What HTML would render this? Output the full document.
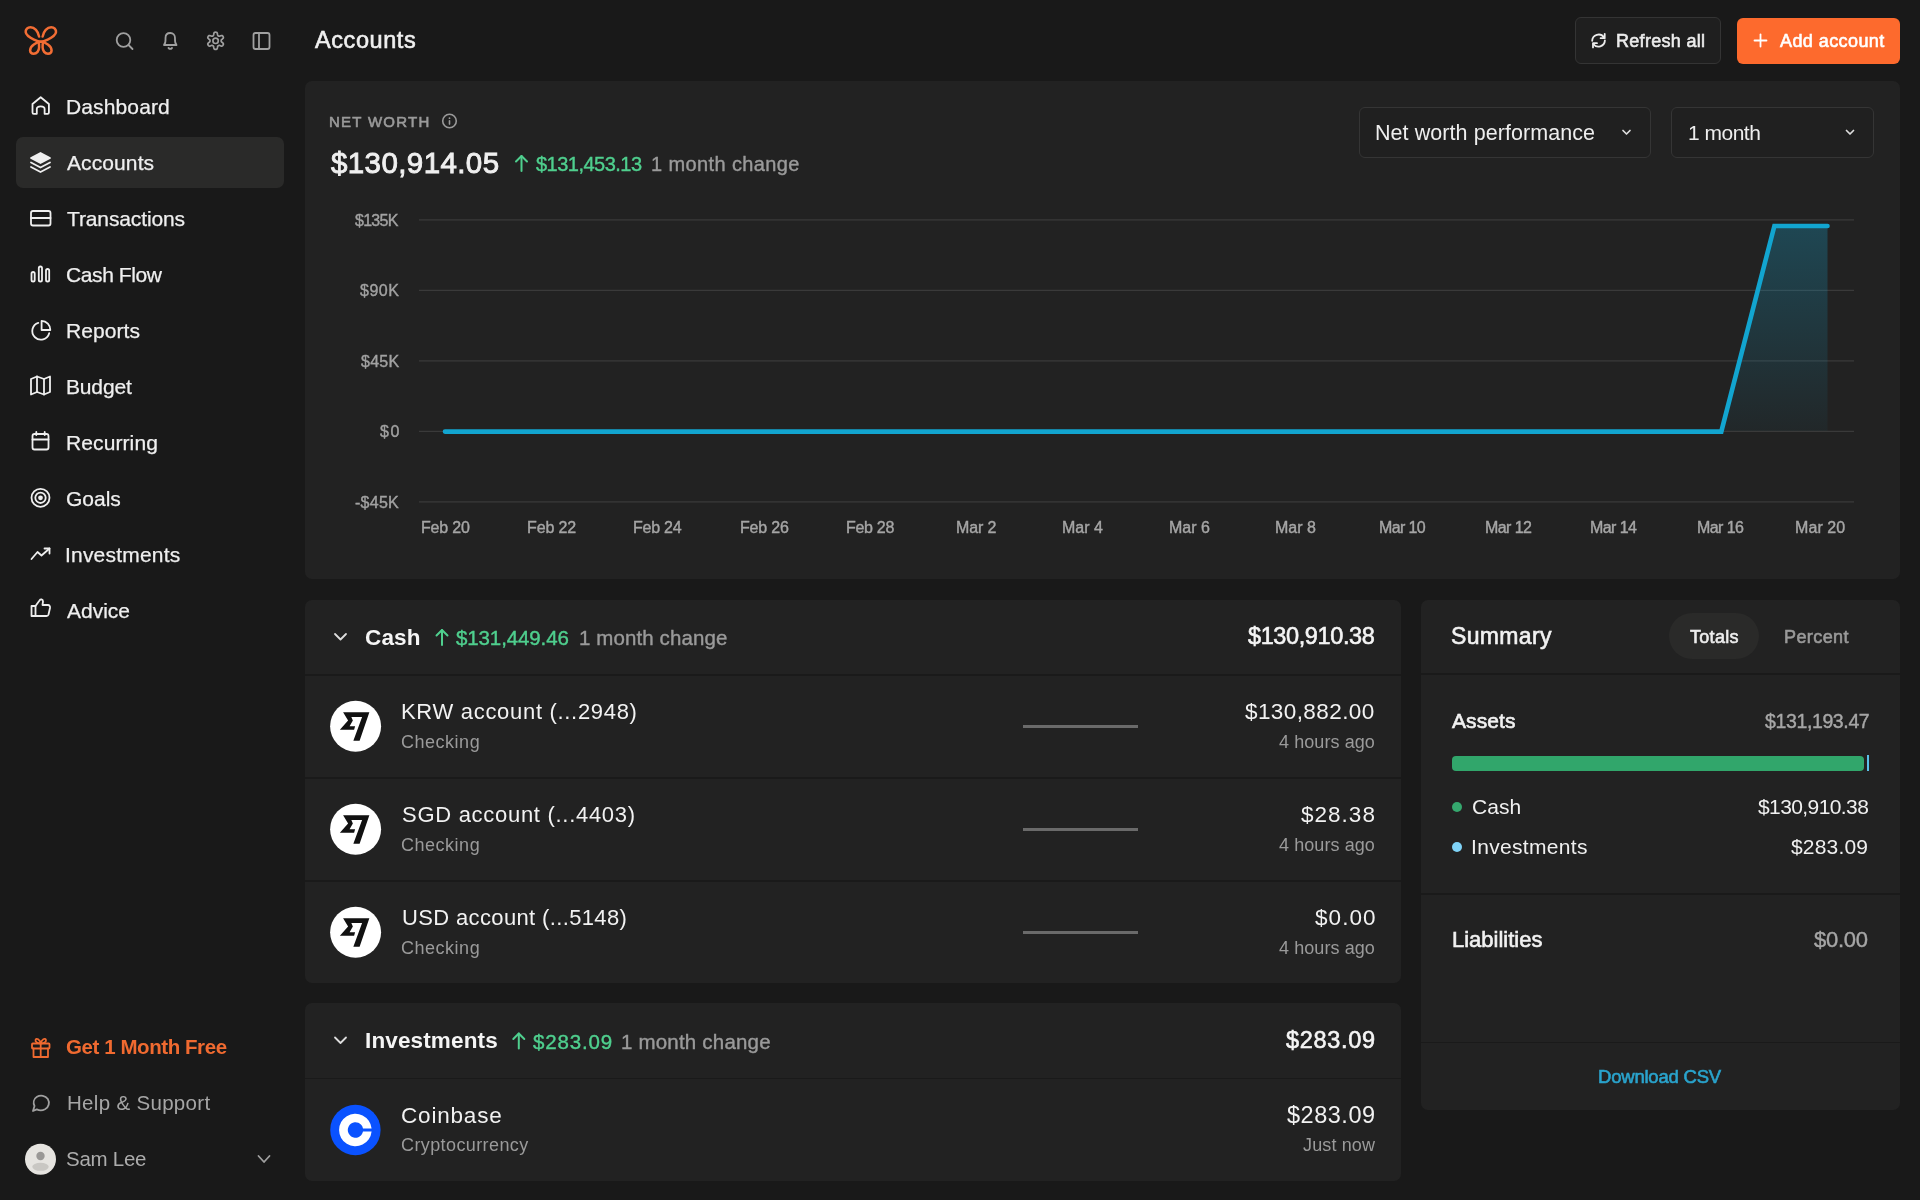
<!DOCTYPE html>
<html><head><meta charset="utf-8"><title>Accounts</title><style>
*{margin:0;padding:0;box-sizing:border-box}
html,body{width:1920px;height:1200px;overflow:hidden;background:#191919;font-family:"Liberation Sans",sans-serif}
.t{position:absolute;white-space:nowrap;line-height:1;will-change:transform}
.abs{position:absolute}
.card{position:absolute;background:#222222;border-radius:7px}
.sep{position:absolute;height:1.5px;background:#1a1a1a}
</style></head>
<body style="">
<div class="card shape" style="left:305px;top:81px;width:1595px;height:497.7px"></div>
<div class="card shape" style="left:305px;top:599.5px;width:1095.8px;height:383.5px"></div>
<div class="card shape" style="left:305px;top:1002.5px;width:1095.8px;height:178.8px"></div>
<div class="card shape" style="left:1420.5px;top:599.5px;width:479.5px;height:510.5px"></div>
<div class="sep shape" style="left:305px;top:674px;width:1096px"></div>
<div class="sep shape" style="left:305px;top:777px;width:1096px"></div>
<div class="sep shape" style="left:305px;top:880px;width:1096px"></div>
<div class="sep shape" style="left:305px;top:1077.5px;width:1096px"></div>
<div class="sep shape" style="left:1421px;top:673px;width:479px"></div>
<div class="sep shape" style="left:1421px;top:893px;width:479px"></div>
<div class="sep shape" style="left:1421px;top:1041.5px;width:479px"></div>
<div class="abs shape" style="left:16px;top:137px;width:268px;height:51px;background:#2a2a29;border-radius:7px"></div>
<div class="abs shape" style="left:1575px;top:17px;width:146px;height:47px;background:#1f1f1f;border:1.5px solid #343434;border-radius:6px"></div>
<div class="abs shape" style="left:1737px;top:18px;width:163px;height:46px;background:#fd6a2d;border-radius:6px"></div>
<div class="abs shape" style="left:1359px;top:107px;width:292px;height:51px;background:#202020;border:1.5px solid #353535;border-radius:6px"></div>
<div class="abs shape" style="left:1671px;top:107px;width:203px;height:51px;background:#202020;border:1.5px solid #353535;border-radius:6px"></div>
<div class="abs shape" style="left:1669px;top:613px;width:90px;height:46px;background:#2a2a29;border-radius:23px"></div>
<div class="abs shape" style="left:1452px;top:755.5px;width:412px;height:15px;background:#31a66b;border-radius:4px"></div>
<div class="abs shape" style="left:1867px;top:755px;width:2px;height:16px;background:#5bc0e8"></div>
<div class="abs shape" style="left:1451.5px;top:802px;width:10px;height:10px;background:#35a86e;border-radius:50%"></div>
<div class="abs shape" style="left:1451.5px;top:842px;width:10px;height:10px;background:#7fd3f7;border-radius:50%"></div>
<div class="abs shape" style="left:1023px;top:724.9px;width:115px;height:2.8px;background:#6a6a6a"></div>
<div class="abs shape" style="left:1023px;top:827.9px;width:115px;height:2.8px;background:#6a6a6a"></div>
<div class="abs shape" style="left:1023px;top:930.9px;width:115px;height:2.8px;background:#6a6a6a"></div>
<svg class="abs shape" style="left:0;top:0;width:1920px;height:1200px" viewBox="0 0 1920 1200"><line x1="419" y1="219.8" x2="1854" y2="219.8" stroke="#3a3a3a" stroke-width="1.3"/><line x1="419" y1="290.3" x2="1854" y2="290.3" stroke="#3a3a3a" stroke-width="1.3"/><line x1="419" y1="360.8" x2="1854" y2="360.8" stroke="#3a3a3a" stroke-width="1.3"/><line x1="419" y1="431.3" x2="1854" y2="431.3" stroke="#3a3a3a" stroke-width="1.3"/><line x1="419" y1="501.8" x2="1854" y2="501.8" stroke="#3a3a3a" stroke-width="1.3"/><defs><linearGradient id="fg" x1="0" y1="0" x2="0" y2="1">
<stop offset="0" stop-color="#16a6d2" stop-opacity="0.28"/><stop offset="1" stop-color="#16a6d2" stop-opacity="0.04"/></linearGradient></defs>
<path d="M1721.3 431 L1774.4 226 L1827.5 226 L1827.5 431 Z" fill="url(#fg)"/>
<path d="M445 431.6 L1721.3 431.6 L1774.4 226 L1827.5 226" fill="none" stroke="#12a5d0" stroke-width="4.6" stroke-linecap="round" stroke-linejoin="miter"/></svg>
<svg class="abs shape" style="left:0;top:0;width:1920px;height:1200px" viewBox="0 0 1920 1200"><g transform="translate(18,20)" fill="none" stroke-linecap="round" stroke-linejoin="round" stroke="#f26d34" stroke-width="2.5">
<path d="M21.1 16.6 C20.2 11 16.5 7.2 12.5 7.2 C9.5 7.2 7.5 9.5 7.7 12.2 C8 15.5 11.8 17.6 16 19.6 C19 21 21 21.7 22.85 21.7 C24.7 21.7 26.7 21 29.7 19.6 C33.9 17.6 37.7 15.5 38 12.2 C38.2 9.5 36.2 7.2 33.2 7.2 C29.2 7.2 25.5 11 24.6 16.6"/>
<path d="M22.3 21.8 C18.8 22.3 12 25.5 12.1 30.5 C12.2 32.8 13.8 33.8 15.7 33.8 C18.8 33.8 21.1 30.8 21.1 27.3 C21.1 25 21 23.2 20.6 21.9"/>
<path d="M23.4 21.8 C26.9 22.3 33.7 25.5 33.6 30.5 C33.5 32.8 31.9 33.8 30 33.8 C26.9 33.8 24.6 30.8 24.6 27.3 C24.6 25 24.7 23.2 25.1 21.9"/>
</g><g fill="none" stroke-linecap="round" stroke-linejoin="round" stroke="#a0a0a0" stroke-width="1.8"><circle cx="123.5" cy="40" r="6.8"/><path d="M128.5 45 L132.5 49"/></g><g fill="none" stroke-linecap="round" stroke-linejoin="round" stroke="#a0a0a0" stroke-width="1.8"><path d="M164 45 C166 43 165.5 40 165.5 38 C165.5 35 167.5 33 170.3 33 C173 33 175 35 175 38 C175 40 174.5 43 176.5 45 Z"/><path d="M168.5 48 C169.5 49 171 49 172 48"/></g><g fill="none" stroke-linecap="round" stroke-linejoin="round" stroke="#a0a0a0" stroke-width="1.7"><path d="M215.60 32.19 L216.16 32.23 L216.71 32.41 L217.17 32.90 L217.44 33.94 L217.58 34.98 L217.79 35.50 L218.08 35.77 L218.39 35.96 L218.72 36.13 L219.09 36.25 L219.65 36.18 L220.62 35.78 L221.66 35.49 L222.32 35.65 L222.74 36.03 L223.06 36.49 L223.30 37.00 L223.42 37.56 L223.23 38.21 L222.46 38.96 L221.63 39.60 L221.28 40.05 L221.20 40.43 L221.19 40.80 L221.20 41.17 L221.28 41.55 L221.63 42.00 L222.46 42.64 L223.23 43.39 L223.42 44.04 L223.30 44.60 L223.06 45.11 L222.74 45.57 L222.32 45.95 L221.66 46.11 L220.62 45.82 L219.65 45.42 L219.09 45.35 L218.72 45.47 L218.39 45.64 L218.08 45.83 L217.79 46.10 L217.58 46.62 L217.44 47.66 L217.17 48.70 L216.71 49.19 L216.16 49.37 L215.60 49.41 L215.04 49.37 L214.49 49.19 L214.03 48.70 L213.76 47.66 L213.62 46.62 L213.41 46.10 L213.12 45.83 L212.81 45.64 L212.48 45.47 L212.11 45.35 L211.55 45.42 L210.58 45.82 L209.54 46.11 L208.88 45.95 L208.46 45.57 L208.14 45.11 L207.90 44.60 L207.78 44.04 L207.97 43.39 L208.74 42.64 L209.57 42.00 L209.92 41.55 L210.00 41.17 L210.01 40.80 L210.00 40.43 L209.92 40.05 L209.57 39.60 L208.74 38.96 L207.97 38.21 L207.78 37.56 L207.90 37.00 L208.14 36.49 L208.46 36.03 L208.88 35.65 L209.54 35.49 L210.58 35.78 L211.55 36.18 L212.11 36.25 L212.48 36.13 L212.81 35.96 L213.12 35.77 L213.41 35.50 L213.62 34.98 L213.76 33.94 L214.03 32.90 L214.49 32.41 L215.04 32.23 Z"/><circle cx="215.6" cy="40.8" r="2.7"/></g><g fill="none" stroke-linecap="round" stroke-linejoin="round" stroke="#a0a0a0" stroke-width="1.8"><rect x="253.5" y="33" width="16" height="16" rx="2"/><path d="M259 33 L259 49"/></g><g fill="none" stroke-linecap="round" stroke-linejoin="round" stroke="#efefef" stroke-width="1.8"><path d="M32.5 104 L40.7 97.2 L48.9 104 L48.9 112.5 C48.9 113.3 48.4 113.8 47.6 113.8 L44.6 113.8 L44.6 109 C44.6 107.4 43.2 106.3 40.7 106.3 C38.2 106.3 36.8 107.4 36.8 109 L36.8 113.8 L33.8 113.8 C33 113.8 32.5 113.3 32.5 112.5 Z"/></g><g fill="none" stroke-linecap="round" stroke-linejoin="round" stroke="#efefef" stroke-width="1.8"><path d="M40.5 153 L50 158 L40.5 163 L31 158 Z" fill="#efefef"/><path d="M31 162.5 L40.5 167.5 L50 162.5"/><path d="M31 167 L40.5 172 L50 167"/></g><g fill="none" stroke-linecap="round" stroke-linejoin="round" stroke="#efefef" stroke-width="1.8"><rect x="31" y="211" width="19.5" height="14.5" rx="2"/><path d="M31 218 L50.5 218"/></g><g fill="none" stroke-linecap="round" stroke-linejoin="round" stroke="#efefef" stroke-width="1.8"><rect x="31.5" y="272" width="3.2" height="9.5" rx="1.6"/><rect x="38.8" y="266.5" width="3.2" height="15" rx="1.6"/><rect x="46" y="269" width="3.2" height="12.5" rx="1.6"/></g><g fill="none" stroke-linecap="round" stroke-linejoin="round" stroke="#efefef" stroke-width="1.8"><path d="M38.3 322.8 A 8.6 8.6 0 1 0 49.2 333.2"/><path d="M41.6 320.9 L41.6 330 L50.3 330 A 8.9 8.9 0 0 0 41.6 320.9 Z"/></g><g fill="none" stroke-linecap="round" stroke-linejoin="round" stroke="#efefef" stroke-width="1.8"><path d="M31 379 L37 376.5 L44 379 L50 376.5 L50 392 L44 394.5 L37 392 L31 394.5 Z"/><path d="M37 376.5 L37 392"/><path d="M44 379 L44 394.5"/></g><g fill="none" stroke-linecap="round" stroke-linejoin="round" stroke="#efefef" stroke-width="1.8"><rect x="32.5" y="434" width="16" height="15.5" rx="2"/><path d="M32.5 439.5 L48.5 439.5"/><path d="M36.3 432 L36.3 435"/><path d="M44.7 432 L44.7 435"/></g><g fill="none" stroke-linecap="round" stroke-linejoin="round" stroke="#efefef" stroke-width="1.8"><circle cx="40.5" cy="497.8" r="9"/><circle cx="40.5" cy="497.8" r="5.2"/><circle cx="40.5" cy="497.8" r="1.5" fill="#efefef"/></g><g fill="none" stroke-linecap="round" stroke-linejoin="round" stroke="#efefef" stroke-width="1.8"><path d="M31.5 559 L37.5 552 L41.5 555.5 L49.5 548.5"/><path d="M44.5 548.5 L49.5 548.5 L49.5 553.5"/></g><g fill="none" stroke-linecap="round" stroke-linejoin="round" stroke="#efefef" stroke-width="1.8"><path d="M31.5 606 L35.5 606 L35.5 616 L31.5 616 Z"/><path d="M35.5 606 L39.5 600.5 C40.5 599 43 599 43 601.5 L42.5 605 L48 605 C49.5 605 50.3 606.5 50 608 L48.5 614.5 C48.2 615.5 47.5 616 46.5 616 L35.5 616"/></g><g fill="none" stroke-linecap="round" stroke-linejoin="round" stroke="#f06a30" stroke-width="1.8"><rect x="32" y="1043.5" width="17.5" height="5" rx="0.8"/><path d="M33.5 1048.5 L33.5 1057 L48 1057 L48 1048.5"/><path d="M40.7 1043.5 L40.7 1057"/><path d="M40.7 1043.5 C38 1043.5 35 1042 35.5 1040 C36.3 1037.5 40 1039.5 40.7 1043.5 C41.5 1039.5 45.2 1037.5 46 1040 C46.5 1042 43.5 1043.5 40.7 1043.5"/></g><g fill="none" stroke-linecap="round" stroke-linejoin="round" stroke="#a0a0a0" stroke-width="1.8"><path d="M33 1111 L34.5 1106 C33 1103 33.5 1099 37 1096.8 C40.5 1094.6 45.5 1095.5 47.8 1099 C50 1102.5 48.8 1107.2 45 1109.3 C42.3 1110.7 39 1110.5 36.8 1109.4 Z"/></g><circle cx="40.5" cy="1159.3" r="15.5" fill="#e6e4e0"/><circle cx="40.5" cy="1156" r="4.2" fill="#9a9896"/><ellipse cx="40.5" cy="1166.8" rx="8.2" ry="4" fill="#c9c7c3"/><path d="M258.5 1156 L264 1162 L269.5 1156" fill="none" stroke-linecap="round" stroke-linejoin="round" stroke="#a0a0a0" stroke-width="1.8"/><g fill="none" stroke-linecap="round" stroke-linejoin="round" stroke="#ececec" stroke-width="1.8"><path d="M1592.2 40.8 A6.4 6.4 0 0 1 1603.9 37.4"/><path d="M1604.7 33.8 L1604.7 38.2 L1600.6 38.2"/><path d="M1604.9 40.4 A6.4 6.4 0 0 1 1593.3 43.9"/><path d="M1593 47.4 L1593 43.2 L1597 43.2"/></g><g fill="none" stroke-linecap="round" stroke-linejoin="round" stroke="#ffffff" stroke-width="1.8"><path d="M1760.5 34.5 L1760.5 46.5"/><path d="M1754.5 40.5 L1766.5 40.5"/></g><g fill="none" stroke-linecap="round" stroke-linejoin="round" stroke="#9a9a9a" stroke-width="1.6"><circle cx="449.5" cy="121" r="6.8"/><path d="M449.5 120.8 L449.5 124.1"/></g><circle cx="449.5" cy="118.2" r="0.9" fill="#9a9a9a"/><g fill="none" stroke-linecap="round" stroke-linejoin="round" stroke="#4fcf8e" stroke-width="2"><path d="M521.5 171 L521.5 156"/><path d="M516.0 161.5 L521.5 156 L527.0 161.5"/></g><g fill="none" stroke-linecap="round" stroke-linejoin="round" stroke="#4fcf8e" stroke-width="2"><path d="M442 645 L442 630"/><path d="M436.5 635.5 L442 630 L447.5 635.5"/></g><g fill="none" stroke-linecap="round" stroke-linejoin="round" stroke="#4fcf8e" stroke-width="2"><path d="M518.8 1048.5 L518.8 1033.5"/><path d="M513.3 1039.0 L518.8 1033.5 L524.3 1039.0"/></g><path d="M1623.0 130.5 L1626.5 134 L1630.0 130.5" fill="none" stroke-linecap="round" stroke-linejoin="round" stroke="#dddddd" stroke-width="1.7"/><path d="M1846.5 130.5 L1850 134 L1853.5 130.5" fill="none" stroke-linecap="round" stroke-linejoin="round" stroke="#dddddd" stroke-width="1.7"/><path d="M335 634 L340.5 639.5 L346 634" fill="none" stroke-linecap="round" stroke-linejoin="round" stroke="#dddddd" stroke-width="1.8"/><path d="M335 1037.5 L340.5 1043.0 L346 1037.5" fill="none" stroke-linecap="round" stroke-linejoin="round" stroke="#dddddd" stroke-width="1.8"/><circle cx="355.6" cy="726.3" r="25.5" fill="#ffffff"/><path d="M343.10 712.25 L369.35 712.25 L359.60 740.75 L353.35 740.75 L362.10 717.00 L351.35 717.00 L352.85 720.50 L349.60 726.25 L355.10 726.25 L354.10 729.75 L339.85 729.75 L348.10 720.50 Z" fill="#111111"/><circle cx="355.6" cy="829.3" r="25.5" fill="#ffffff"/><path d="M343.10 815.25 L369.35 815.25 L359.60 843.75 L353.35 843.75 L362.10 820.00 L351.35 820.00 L352.85 823.50 L349.60 829.25 L355.10 829.25 L354.10 832.75 L339.85 832.75 L348.10 823.50 Z" fill="#111111"/><circle cx="355.6" cy="932.3" r="25.5" fill="#ffffff"/><path d="M343.10 918.25 L369.35 918.25 L359.60 946.75 L353.35 946.75 L362.10 923.00 L351.35 923.00 L352.85 926.50 L349.60 932.25 L355.10 932.25 L354.10 935.75 L339.85 935.75 L348.10 926.50 Z" fill="#111111"/><circle cx="355.4" cy="1130" r="25.2" fill="#0a52ff"/><path d="M371.6 1128.4 A16.3 16.3 0 1 0 371.6 1131.6 L363 1131.6 A7.7 7.7 0 1 1 363 1128.4 Z" fill="#ffffff"/></svg>
<span id="t0" class="t" style="left:314.50px;top:29px;font-size:23.5px;font-weight:normal;letter-spacing:0.571px;color:#f0f0f0;-webkit-text-stroke:0.6px #f0f0f0">Accounts</span>
<span id="t1" class="t" style="left:1616.10px;top:32px;font-size:18.0px;font-weight:normal;letter-spacing:0.300px;color:#ececec;-webkit-text-stroke:0.6px #ececec">Refresh all</span>
<span id="t2" class="t" style="left:1779.90px;top:32px;font-size:18.0px;font-weight:normal;letter-spacing:0.420px;color:#ffffff;-webkit-text-stroke:0.6px #ffffff">Add account</span>
<span id="t3" class="t" style="left:65.50px;top:96px;font-size:21.0px;font-weight:normal;letter-spacing:0.125px;color:#efefef;-webkit-text-stroke:0.25px #efefef">Dashboard</span>
<span id="t4" class="t" style="left:66.50px;top:152px;font-size:21.0px;font-weight:normal;letter-spacing:0.101px;color:#efefef;-webkit-text-stroke:0.25px #efefef">Accounts</span>
<span id="t5" class="t" style="left:66.50px;top:208px;font-size:21.0px;font-weight:normal;letter-spacing:-0.128px;color:#efefef;-webkit-text-stroke:0.25px #efefef">Transactions</span>
<span id="t6" class="t" style="left:65.50px;top:264px;font-size:21.0px;font-weight:normal;letter-spacing:-0.400px;color:#efefef;-webkit-text-stroke:0.25px #efefef">Cash Flow</span>
<span id="t7" class="t" style="left:65.50px;top:320px;font-size:21.0px;font-weight:normal;letter-spacing:0.083px;color:#efefef;-webkit-text-stroke:0.25px #efefef">Reports</span>
<span id="t8" class="t" style="left:65.50px;top:376px;font-size:21.0px;font-weight:normal;letter-spacing:-0.160px;color:#efefef;-webkit-text-stroke:0.25px #efefef">Budget</span>
<span id="t9" class="t" style="left:65.50px;top:432px;font-size:21.0px;font-weight:normal;letter-spacing:0.100px;color:#efefef;-webkit-text-stroke:0.25px #efefef">Recurring</span>
<span id="t10" class="t" style="left:65.50px;top:488px;font-size:21.0px;font-weight:normal;letter-spacing:0.000px;color:#efefef;-webkit-text-stroke:0.25px #efefef">Goals</span>
<span id="t11" class="t" style="left:64.50px;top:544px;font-size:21.0px;font-weight:normal;letter-spacing:0.200px;color:#efefef;-webkit-text-stroke:0.25px #efefef">Investments</span>
<span id="t12" class="t" style="left:66.50px;top:600px;font-size:21.0px;font-weight:normal;letter-spacing:0.000px;color:#efefef;-webkit-text-stroke:0.25px #efefef">Advice</span>
<span id="t13" class="t" style="left:65.70px;top:1037px;font-size:20.5px;font-weight:bold;letter-spacing:-0.427px;color:#f06a30">Get 1 Month Free</span>
<span id="t14" class="t" style="left:66.70px;top:1093px;font-size:20.5px;font-weight:normal;letter-spacing:0.316px;color:#a6a6a6">Help & Support</span>
<span id="t15" class="t" style="left:65.50px;top:1149px;font-size:20.5px;font-weight:normal;letter-spacing:-0.266px;color:#acacac">Sam Lee</span>
<span id="t16" class="t" style="left:329.10px;top:114px;font-size:15px;font-weight:normal;letter-spacing:1.250px;color:#9a9a9a;-webkit-text-stroke:0.6px #9a9a9a">NET WORTH</span>
<span id="t17" class="t" style="left:330.50px;top:148px;font-size:29.5px;font-weight:normal;letter-spacing:0.400px;color:#f0f0f0;-webkit-text-stroke:0.9px #f0f0f0">$130,914.05</span>
<span id="t18" class="t" style="left:535.50px;top:154px;font-size:20px;font-weight:normal;letter-spacing:-0.520px;color:#4fcf8e;-webkit-text-stroke:0.4px #4fcf8e">$131,453.13</span>
<span id="t19" class="t" style="left:650.50px;top:154px;font-size:20px;font-weight:normal;letter-spacing:0.385px;color:#9a9a9a;-webkit-text-stroke:0.4px #9a9a9a">1 month change</span>
<span id="t20" class="t" style="left:1374.50px;top:123px;font-size:21.5px;font-weight:normal;letter-spacing:0.070px;color:#eeeeee">Net worth performance</span>
<span id="t21" class="t" style="left:1687.70px;top:122px;font-size:21px;font-weight:normal;letter-spacing:-0.500px;color:#eeeeee">1 month</span>
<span id="t22" class="t" style="left:354.70px;top:213px;font-size:16.0px;font-weight:normal;letter-spacing:-0.725px;color:#a2a2a2;-webkit-text-stroke:0.4px #a2a2a2">$135K</span>
<span id="t23" class="t" style="left:359.50px;top:283px;font-size:16.0px;font-weight:normal;letter-spacing:0.500px;color:#a2a2a2;-webkit-text-stroke:0.4px #a2a2a2">$90K</span>
<span id="t24" class="t" style="left:360.90px;top:354px;font-size:16.0px;font-weight:normal;letter-spacing:0.234px;color:#a2a2a2;-webkit-text-stroke:0.4px #a2a2a2">$45K</span>
<span id="t25" class="t" style="left:379.90px;top:424px;font-size:16.0px;font-weight:normal;letter-spacing:1.700px;color:#a2a2a2;-webkit-text-stroke:0.4px #a2a2a2">$0</span>
<span id="t26" class="t" style="left:354.70px;top:495px;font-size:16.0px;font-weight:normal;letter-spacing:0.275px;color:#a2a2a2;-webkit-text-stroke:0.4px #a2a2a2">-$45K</span>
<span id="t27" class="t" style="left:420.50px;top:520px;font-size:16.0px;font-weight:normal;letter-spacing:-0.200px;color:#a6a6a6;-webkit-text-stroke:0.4px #a6a6a6">Feb 20</span>
<span id="t28" class="t" style="left:526.50px;top:520px;font-size:16.0px;font-weight:normal;letter-spacing:-0.120px;color:#a6a6a6;-webkit-text-stroke:0.4px #a6a6a6">Feb 22</span>
<span id="t29" class="t" style="left:633.10px;top:520px;font-size:16.0px;font-weight:normal;letter-spacing:-0.240px;color:#a6a6a6;-webkit-text-stroke:0.4px #a6a6a6">Feb 24</span>
<span id="t30" class="t" style="left:739.90px;top:520px;font-size:16.0px;font-weight:normal;letter-spacing:-0.180px;color:#a6a6a6;-webkit-text-stroke:0.4px #a6a6a6">Feb 26</span>
<span id="t31" class="t" style="left:845.50px;top:520px;font-size:16.0px;font-weight:normal;letter-spacing:-0.300px;color:#a6a6a6;-webkit-text-stroke:0.4px #a6a6a6">Feb 28</span>
<span id="t32" class="t" style="left:956.10px;top:520px;font-size:16.0px;font-weight:normal;letter-spacing:-0.125px;color:#a6a6a6;-webkit-text-stroke:0.4px #a6a6a6">Mar 2</span>
<span id="t33" class="t" style="left:1061.50px;top:520px;font-size:16.0px;font-weight:normal;letter-spacing:0.000px;color:#a6a6a6;-webkit-text-stroke:0.4px #a6a6a6">Mar 4</span>
<span id="t34" class="t" style="left:1168.50px;top:520px;font-size:16.0px;font-weight:normal;letter-spacing:0.025px;color:#a6a6a6;-webkit-text-stroke:0.4px #a6a6a6">Mar 6</span>
<span id="t35" class="t" style="left:1274.50px;top:520px;font-size:16.0px;font-weight:normal;letter-spacing:0.025px;color:#a6a6a6;-webkit-text-stroke:0.4px #a6a6a6">Mar 8</span>
<span id="t36" class="t" style="left:1378.50px;top:520px;font-size:16.0px;font-weight:normal;letter-spacing:-0.620px;color:#a6a6a6;-webkit-text-stroke:0.4px #a6a6a6">Mar 10</span>
<span id="t37" class="t" style="left:1484.90px;top:520px;font-size:16.0px;font-weight:normal;letter-spacing:-0.580px;color:#a6a6a6;-webkit-text-stroke:0.4px #a6a6a6">Mar 12</span>
<span id="t38" class="t" style="left:1590.30px;top:520px;font-size:16.0px;font-weight:normal;letter-spacing:-0.580px;color:#a6a6a6;-webkit-text-stroke:0.4px #a6a6a6">Mar 14</span>
<span id="t39" class="t" style="left:1697.30px;top:520px;font-size:16.0px;font-weight:normal;letter-spacing:-0.560px;color:#a6a6a6;-webkit-text-stroke:0.4px #a6a6a6">Mar 16</span>
<span id="t40" class="t" style="left:1794.50px;top:520px;font-size:16.0px;font-weight:normal;letter-spacing:0.080px;color:#a6a6a6;-webkit-text-stroke:0.4px #a6a6a6">Mar 20</span>
<span id="t41" class="t" style="left:364.50px;top:627px;font-size:22.5px;font-weight:bold;letter-spacing:0.167px;color:#f5f5f5">Cash</span>
<span id="t42" class="t" style="left:456.30px;top:628px;font-size:20.5px;font-weight:normal;letter-spacing:-0.110px;color:#4fcf8e;-webkit-text-stroke:0.4px #4fcf8e">$131,449.46</span>
<span id="t43" class="t" style="left:579.10px;top:628px;font-size:20.5px;font-weight:normal;letter-spacing:0.101px;color:#9a9a9a;-webkit-text-stroke:0.4px #9a9a9a">1 month change</span>
<span id="t44" class="t" style="left:1248.30px;top:625px;font-size:23.5px;font-weight:normal;letter-spacing:-0.390px;color:#f5f5f5;-webkit-text-stroke:0.6px #f5f5f5">$130,910.38</span>
<span id="t45" class="t" style="left:400.70px;top:701px;font-size:22px;font-weight:normal;letter-spacing:0.690px;color:#f2f2f2">KRW account (...2948)</span>
<span id="t46" class="t" style="left:400.70px;top:733px;font-size:18px;font-weight:normal;letter-spacing:0.515px;color:#9a9a9a">Checking</span>
<span id="t47" class="t" style="left:1245.30px;top:701px;font-size:22.5px;font-weight:normal;letter-spacing:0.410px;color:#f2f2f2">$130,882.00</span>
<span id="t48" class="t" style="left:1278.50px;top:733px;font-size:18px;font-weight:normal;letter-spacing:0.080px;color:#9a9a9a">4 hours ago</span>
<span id="t49" class="t" style="left:401.70px;top:804px;font-size:22px;font-weight:normal;letter-spacing:0.710px;color:#f2f2f2">SGD account (...4403)</span>
<span id="t50" class="t" style="left:400.70px;top:836px;font-size:18px;font-weight:normal;letter-spacing:0.515px;color:#9a9a9a">Checking</span>
<span id="t51" class="t" style="left:1301.30px;top:804px;font-size:22.5px;font-weight:normal;letter-spacing:1.020px;color:#f2f2f2">$28.38</span>
<span id="t52" class="t" style="left:1278.50px;top:836px;font-size:18px;font-weight:normal;letter-spacing:0.080px;color:#9a9a9a">4 hours ago</span>
<span id="t53" class="t" style="left:401.70px;top:907px;font-size:22px;font-weight:normal;letter-spacing:0.360px;color:#f2f2f2">USD account (...5148)</span>
<span id="t54" class="t" style="left:400.70px;top:939px;font-size:18px;font-weight:normal;letter-spacing:0.515px;color:#9a9a9a">Checking</span>
<span id="t55" class="t" style="left:1314.70px;top:907px;font-size:22.5px;font-weight:normal;letter-spacing:1.075px;color:#f2f2f2">$0.00</span>
<span id="t56" class="t" style="left:1278.50px;top:939px;font-size:18px;font-weight:normal;letter-spacing:0.080px;color:#9a9a9a">4 hours ago</span>
<span id="t57" class="t" style="left:365.30px;top:1030px;font-size:22.5px;font-weight:bold;letter-spacing:0.140px;color:#f5f5f5">Investments</span>
<span id="t58" class="t" style="left:533.10px;top:1032px;font-size:20.5px;font-weight:normal;letter-spacing:0.850px;color:#4fcf8e;-webkit-text-stroke:0.4px #4fcf8e">$283.09</span>
<span id="t59" class="t" style="left:620.50px;top:1032px;font-size:20.5px;font-weight:normal;letter-spacing:0.199px;color:#9a9a9a;-webkit-text-stroke:0.4px #9a9a9a">1 month change</span>
<span id="t60" class="t" style="left:1285.50px;top:1029px;font-size:23.5px;font-weight:normal;letter-spacing:0.700px;color:#f5f5f5;-webkit-text-stroke:0.6px #f5f5f5">$283.09</span>
<span id="t61" class="t" style="left:401.10px;top:1105px;font-size:22.5px;font-weight:normal;letter-spacing:0.815px;color:#f2f2f2">Coinbase</span>
<span id="t62" class="t" style="left:400.50px;top:1136px;font-size:18px;font-weight:normal;letter-spacing:0.400px;color:#9a9a9a">Cryptocurrency</span>
<span id="t63" class="t" style="left:1287.30px;top:1104px;font-size:23.5px;font-weight:normal;letter-spacing:0.517px;color:#f2f2f2">$283.09</span>
<span id="t64" class="t" style="left:1302.70px;top:1136px;font-size:18px;font-weight:normal;letter-spacing:0.129px;color:#9a9a9a">Just now</span>
<span id="t65" class="t" style="left:1450.50px;top:625px;font-size:23.0px;font-weight:normal;letter-spacing:0.333px;color:#f2f2f2;-webkit-text-stroke:0.6px #f2f2f2">Summary</span>
<span id="t66" class="t" style="left:1689.50px;top:628px;font-size:18px;font-weight:normal;letter-spacing:0.300px;color:#ededed;-webkit-text-stroke:0.6px #ededed">Totals</span>
<span id="t67" class="t" style="left:1783.50px;top:628px;font-size:18px;font-weight:normal;letter-spacing:0.417px;color:#9a9a9a;-webkit-text-stroke:0.6px #9a9a9a">Percent</span>
<span id="t68" class="t" style="left:1451.50px;top:710px;font-size:21.0px;font-weight:normal;letter-spacing:0.100px;color:#f2f2f2;-webkit-text-stroke:0.6px #f2f2f2">Assets</span>
<span id="t69" class="t" style="left:1764.50px;top:712px;font-size:19.5px;font-weight:normal;letter-spacing:-0.375px;color:#a6a6a6;-webkit-text-stroke:0.4px #a6a6a6">$131,193.47</span>
<span id="t70" class="t" style="left:1471.70px;top:796px;font-size:21px;font-weight:normal;letter-spacing:0.033px;color:#f0f0f0">Cash</span>
<span id="t71" class="t" style="left:1757.50px;top:796px;font-size:21px;font-weight:normal;letter-spacing:-0.590px;color:#f0f0f0">$130,910.38</span>
<span id="t72" class="t" style="left:1470.70px;top:836px;font-size:21px;font-weight:normal;letter-spacing:0.330px;color:#f0f0f0">Investments</span>
<span id="t73" class="t" style="left:1790.50px;top:836px;font-size:21px;font-weight:normal;letter-spacing:0.183px;color:#f0f0f0">$283.09</span>
<span id="t74" class="t" style="left:1451.50px;top:929px;font-size:22.0px;font-weight:normal;letter-spacing:-0.010px;color:#f2f2f2;-webkit-text-stroke:0.6px #f2f2f2">Liabilities</span>
<span id="t75" class="t" style="left:1813.50px;top:929px;font-size:22.0px;font-weight:normal;letter-spacing:-0.250px;color:#a6a6a6;-webkit-text-stroke:0.4px #a6a6a6">$0.00</span>
<span id="t76" class="t" style="left:1597.70px;top:1068px;font-size:18.5px;font-weight:normal;letter-spacing:-0.209px;color:#2aa4cd;-webkit-text-stroke:0.6px #2aa4cd">Download CSV</span>
</body></html>
